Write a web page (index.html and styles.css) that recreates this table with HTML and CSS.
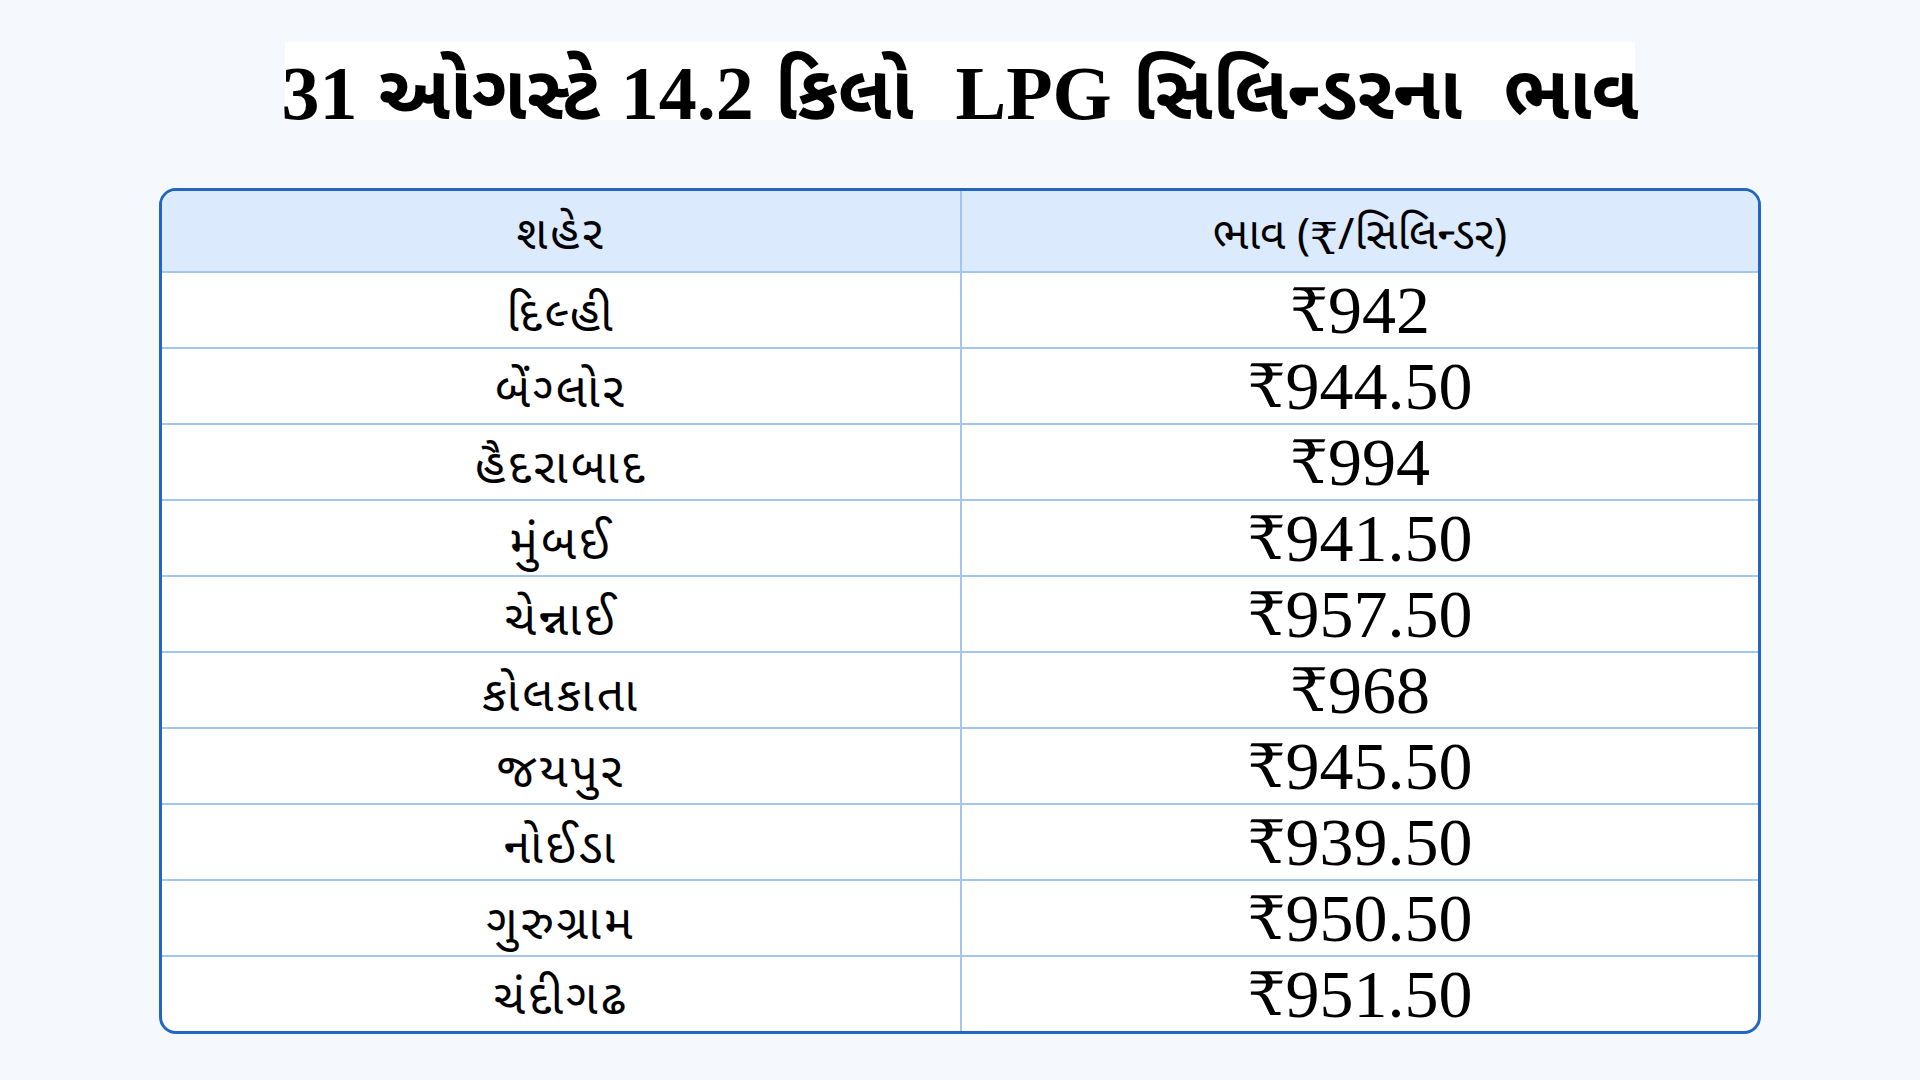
FILE: index.html
```html
<!DOCTYPE html>
<html lang="gu"><head><meta charset="utf-8"><title>LPG ભાવ</title><link rel="stylesheet" href="styles.css"></head>
<body>
<main class="page">
  <h1 class="title"><span class="title-text">31 ઓગસ્ટે 14.2 કિલો  LPG સિલિન્ડરના  ભાવ</span></h1>
  <div class="table">
    <div class="cell head">શહેર</div><div class="cell head right">ભાવ (<span class="rs">₹</span>/સિલિન્ડર)</div>
    <div class="cell city">દિલ્હી</div><div class="cell price right"><span class="rs">₹</span>942</div>
    <div class="cell city">બેંગ્લોર</div><div class="cell price right"><span class="rs">₹</span>944.50</div>
    <div class="cell city">હૈદરાબાદ</div><div class="cell price right"><span class="rs">₹</span>994</div>
    <div class="cell city">મુંબઈ</div><div class="cell price right"><span class="rs">₹</span>941.50</div>
    <div class="cell city">ચેન્નાઈ</div><div class="cell price right"><span class="rs">₹</span>957.50</div>
    <div class="cell city">કોલકાતા</div><div class="cell price right"><span class="rs">₹</span>968</div>
    <div class="cell city">જયપુર</div><div class="cell price right"><span class="rs">₹</span>945.50</div>
    <div class="cell city">નોઈડા</div><div class="cell price right"><span class="rs">₹</span>939.50</div>
    <div class="cell city">ગુરુગ્રામ</div><div class="cell price right"><span class="rs">₹</span>950.50</div>
    <div class="cell city last">ચંદીગઢ</div><div class="cell price right last"><span class="rs">₹</span>951.50</div>
  </div>
</main>
</body></html>
```
FILE: styles.css
```css
html,body{margin:0;padding:0}
body{background:#f5f9fe;color:#000;font-family:"Noto Sans Gujarati","Noto Sans",sans-serif}
.page{display:flex;flex-direction:column;align-items:center;padding-top:42px}
.title{margin:0;height:78px;width:1350px;background:#fff;display:flex;align-items:flex-end;justify-content:center}
.title-text{display:block;white-space:pre;font-family:"Liberation Serif","Noto Sans Gujarati",serif;font-weight:700;font-size:76px;line-height:53px;word-spacing:2px}
.table{margin-top:68px;width:1602px;box-sizing:border-box;border:3px solid #2166c0;border-radius:17px;overflow:hidden;background:#fff;display:grid;grid-template-columns:1fr 1fr;grid-template-rows:82px repeat(9,76px) 74px}
.cell{display:flex;align-items:center;justify-content:center;border-bottom:2px solid #a3c6ef;box-sizing:border-box}
.cell.last{border-bottom:none}
.right{border-left:2px solid #a3c6ef}
.head{background:#dbeafc;font-size:46px;letter-spacing:3px;padding-top:14px}
.head.right{font-size:44px;letter-spacing:0}
.city{font-size:48px;letter-spacing:3px;padding-top:18px}
.city.last{padding-top:16px}
.price{font-family:"Liberation Serif",serif;font-size:68px}
.rs{font-family:"DejaVu Serif","Noto Sans",serif;font-weight:400}
.price .rs{font-size:60px}
```
